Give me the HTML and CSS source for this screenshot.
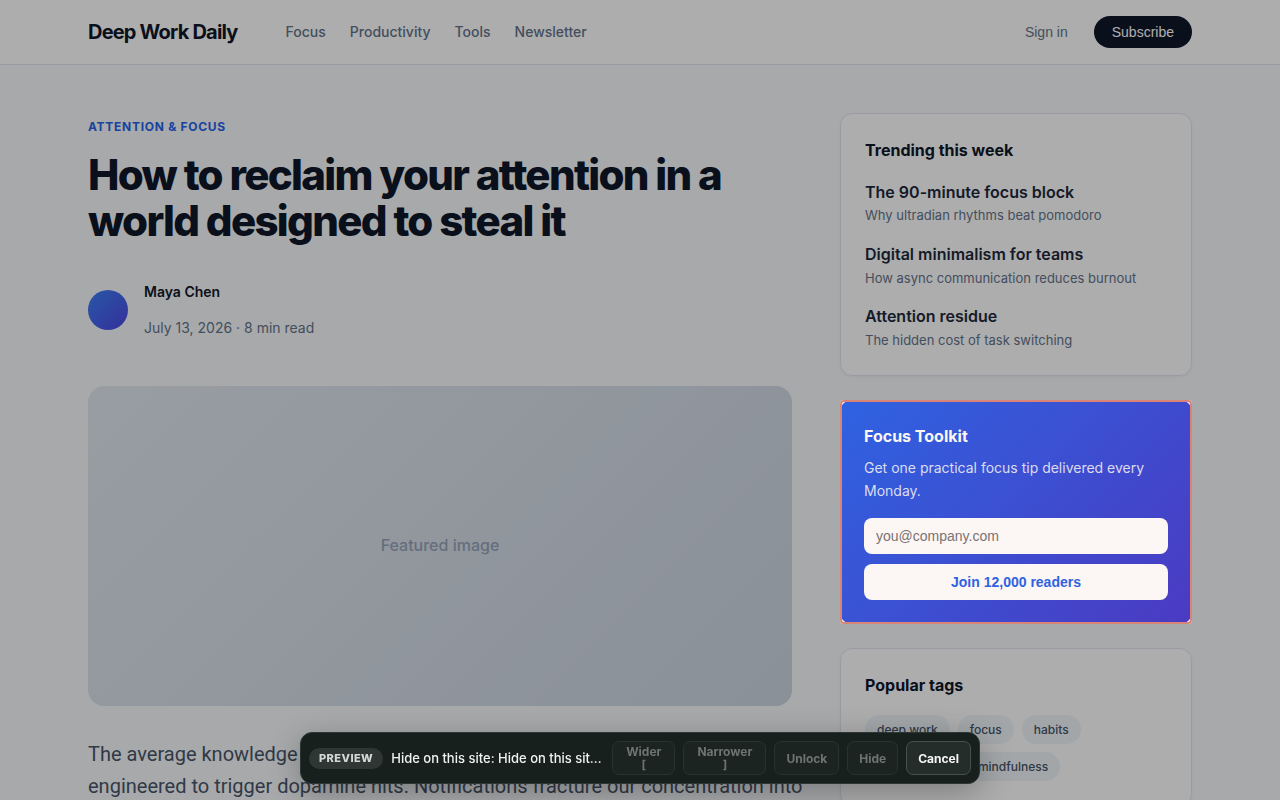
FILE: index.html
```html
<!DOCTYPE html>
<html lang="en">
<head>
<meta charset="utf-8">
<meta name="viewport" content="width=device-width, initial-scale=1">
<title>Deep Work Daily</title>
<link rel="stylesheet" href="styles.css">
</head>
<body>
<header class="site-header">
  <div class="header-inner">
    <div class="brand-nav">
      <a class="logo" href="#">Deep Work Daily</a>
      <nav class="nav">
        <a href="#">Focus</a>
        <a href="#">Productivity</a>
        <a href="#">Tools</a>
        <a href="#">Newsletter</a>
      </nav>
    </div>
    <div class="actions">
      <button class="sign-in" type="button">Sign in</button>
      <button class="subscribe" type="button">Subscribe</button>
    </div>
  </div>
</header>
<main class="layout">
  <article class="article">
    <div class="category"><span>Attention &amp; Focus</span></div>
    <h1>How to reclaim your attention in a world designed to steal it</h1>
    <div class="byline">
      <div class="avatar"></div>
      <div>
        <p class="author">Maya Chen</p>
        <p class="date">July 13, 2026 · 8 min read</p>
      </div>
    </div>
    <div class="featured">Featured image</div>
    <p class="lead">The average knowledge worker now lives inside feeds that are carefully engineered to trigger dopamine hits. Notifications fracture our concentration into</p>
  </article>
  <aside class="sidebar">
    <section class="card">
      <h2>Trending this week</h2>
      <ul class="trending">
        <li><a href="#">The 90-minute focus block</a><p>Why ultradian rhythms beat pomodoro</p></li>
        <li><a href="#">Digital minimalism for teams</a><p>How async communication reduces burnout</p></li>
        <li><a href="#">Attention residue</a><p>The hidden cost of task switching</p></li>
      </ul>
    </section>
    <section class="toolkit">
      <h2>Focus Toolkit</h2>
      <p>Get one practical focus tip delivered every Monday.</p>
      <form>
        <input type="email" placeholder="you@company.com" aria-label="Email address">
        <button type="button">Join 12,000 readers</button>
      </form>
    </section>
    <section class="card">
      <h2>Popular tags</h2>
      <div class="tags">
        <span>deep work</span>
        <span>focus</span>
        <span>habits</span>
        <span>productivity</span>
        <span>mindfulness</span>
      </div>
    </section>
  </aside>
</main>
<div class="toolbar" role="toolbar" aria-label="Preview">
  <span class="badge">Preview</span>
  <span class="message">Hide on this site: Hide on this site only</span>
  <div class="tools">
    <button class="keyed" type="button" disabled>Wider <span>[</span></button>
    <button class="keyed" type="button" disabled>Narrower <span>]</span></button>
    <button type="button" disabled>Unlock</button>
    <button type="button" disabled>Hide</button>
    <button type="button">Cancel</button>
  </div>
</div>
</body>
</html>
```
FILE: styles.css
```css
* {
  box-sizing: border-box;
}

body {
  margin: 0;
  background: #f8fafc;
  color: #0f172a;
  font-family: Inter, "Liberation Sans", sans-serif;
  font-size: 16px;
  line-height: 1.6;
}

a {
  color: inherit;
  text-decoration: none;
}

button,
input {
  border: 0;
  font-family: "Liberation Sans", Arial, sans-serif;
  font-size: 14px;
}

h1,
h2,
ul {
  margin: 0;
  padding: 0;
}

h2 {
  font-size: 16px;
  font-weight: 700;
}

.site-header {
  background: #fff;
  border-bottom: 1px solid #e2e8f0;
}

.header-inner {
  display: flex;
  align-items: center;
  justify-content: space-between;
  max-width: 1200px;
  height: 64px;
  margin: 0 auto;
  padding: 0 48px;
}

.brand-nav {
  display: flex;
  align-items: center;
  gap: 48px;
}

.logo {
  font-size: 20px;
  font-weight: 700;
  letter-spacing: -0.04em;
}

.nav {
  display: flex;
  gap: 24px;
  color: #64748b;
  font-size: 14px;
  font-weight: 500;
}

.actions {
  display: flex;
  align-items: center;
  gap: 16px;
}

.sign-in {
  padding: 8px 10px;
  background: none;
  color: #64748b;
}

.subscribe {
  padding: 8px 18px;
  border-radius: 16px;
  background: #0f172a;
  color: #fff;
}

.layout {
  display: grid;
  grid-template-columns: minmax(0, 2fr) minmax(0, 1fr);
  gap: 48px;
  max-width: 1200px;
  margin: 0 auto;
  padding: 48px;
}

.category span {
  color: #2563eb;
  font-size: 12px;
  font-weight: 700;
  letter-spacing: 0.06em;
  text-transform: uppercase;
}

h1 {
  margin: 13px 0 23px;
  font-size: 42px;
  font-weight: 800;
  line-height: 1.1;
  letter-spacing: -0.04em;
}

.byline {
  display: flex;
  align-items: center;
  gap: 16px;
  margin-bottom: 32px;
  font-size: 14px;
}

.avatar {
  width: 40px;
  height: 40px;
  border-radius: 50%;
  background: linear-gradient(135deg, #3b82f6, #4f46e5);
}

.author {
  font-weight: 600;
}

.date {
  color: #64748b;
}

.featured {
  display: flex;
  align-items: center;
  justify-content: center;
  height: 320px;
  border-radius: 16px;
  background: linear-gradient(135deg, #e2e8f0, #cbd5e1);
  color: #94a3b8;
  font-weight: 500;
}

.lead {
  margin: 32px -16px 0 0;
  color: #475569;
  font-family: Roboto, "Liberation Sans", sans-serif;
  font-size: 20px;
}

.sidebar {
  display: flex;
  flex-direction: column;
  gap: 24px;
}

.card {
  padding: 24px;
  border: 1px solid #e2e8f0;
  border-radius: 12px;
  background: #fff;
  box-shadow: 0 1px 3px rgba(0, 0, 0, 0.06);
}

.card h2 {
  margin-bottom: 16px;
}

.trending {
  display: flex;
  flex-direction: column;
  gap: 16px;
  list-style: none;
}

.trending a {
  display: block;
  color: #1e293b;
  font-weight: 600;
}

.trending p {
  margin: 0;
  color: #64748b;
  font-size: 13px;
}

.toolkit {
  position: relative;
  z-index: 10;
  padding: 24px;
  border-radius: 12px;
  background: linear-gradient(135deg, #2563eb, #4338ca);
  color: #fff;
}

.toolkit::after {
  position: absolute;
  inset: 0;
  border: 2px solid #d98477;
  border-radius: 4px;
  background: rgba(200, 110, 60, 0.06);
  box-shadow: 0 0 0 9999px rgba(0, 0, 0, 0.32);
  content: "";
  pointer-events: none;
}

.toolkit p {
  margin: 8px 0 16px;
  color: rgba(255, 255, 255, 0.85);
  font-size: 14px;
}

.toolkit form {
  display: flex;
  flex-direction: column;
  gap: 10px;
}

.toolkit input,
.toolkit button {
  height: 36px;
  padding: 0 12px;
  border-radius: 8px;
  background: #fff;
}

.toolkit button {
  color: #2563eb;
  font-weight: 700;
}

.tags {
  display: flex;
  flex-wrap: wrap;
  gap: 8px;
}

.tags span {
  padding: 5px 12px;
  border-radius: 16px;
  background: #f1f5f9;
  color: #475569;
  font-size: 12px;
  font-weight: 500;
}

.toolbar {
  position: fixed;
  bottom: 16px;
  left: 50%;
  z-index: 20;
  display: flex;
  align-items: center;
  gap: 8px;
  width: 680px;
  max-width: 100%;
  padding: 8px;
  border: 1px solid #2b3531;
  border-radius: 12px;
  background: #18201d;
  box-shadow: 0 8px 32px rgba(0, 0, 0, 0.28);
  color: #eef2f0;
  transform: translateX(-50%);
}

.badge {
  padding: 2px 10px;
  border-radius: 12px;
  background: #2f3734;
  color: #d3d8d5;
  font-size: 11px;
  font-weight: 800;
  line-height: 17px;
  letter-spacing: 0.04em;
  text-transform: uppercase;
}

.message {
  flex: 1;
  overflow: hidden;
  font-size: 13px;
  font-weight: 500;
  text-overflow: ellipsis;
  white-space: nowrap;
}

.tools {
  display: flex;
  gap: 8px;
}

.tools button {
  height: 34px;
  padding: 0 11px;
  border: 1px solid #46504c;
  border-radius: 7px;
  background: #252d2a;
  color: #f4f7f5;
  font-family: Inter, sans-serif;
  font-size: 12px;
  font-weight: 700;
  line-height: 13px;
}

.tools button:disabled {
  border-color: #2a322f;
  background: #1c2421;
  color: #6d7471;
}

.tools .keyed {
  padding: 0 13px;
}

.keyed span {
  display: block;
}
```
